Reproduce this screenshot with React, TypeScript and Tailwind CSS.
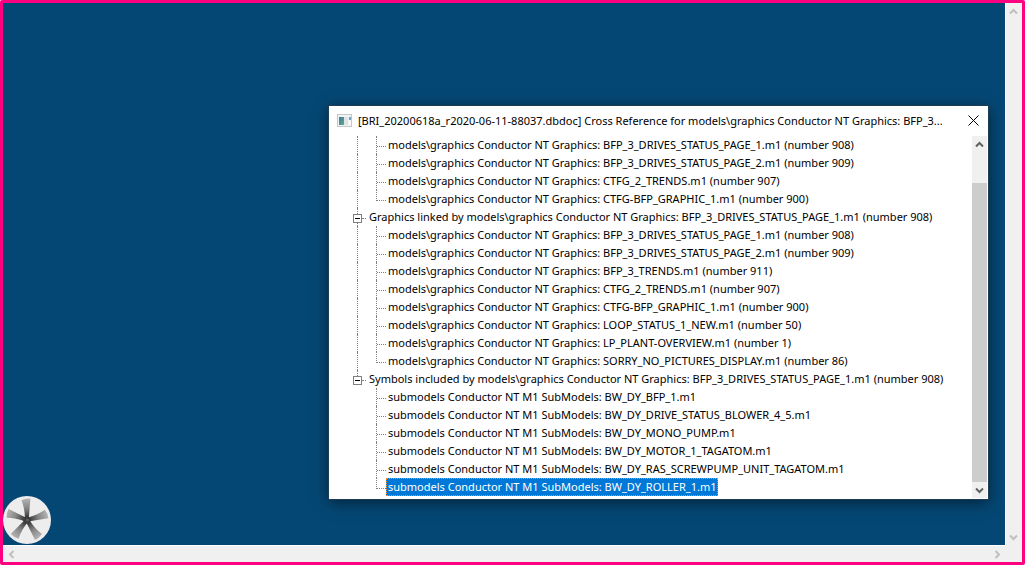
import { useState } from "react";
import clsx from "clsx";

type Direction = "up" | "down" | "left" | "right";

type TreeGroup = {
  id: string;
  // the header of the first group is scrolled out of view
  title?: string;
  items: string[];
};

const GRAPHICS = "models\\graphics Conductor NT Graphics: ";
const SUBMODELS = "submodels Conductor NT M1 SubModels: ";

const groups: TreeGroup[] = [
  {
    id: "linking",
    items: [
      GRAPHICS + "BFP_3_DRIVES_STATUS_PAGE_1.m1 (number 908)",
      GRAPHICS + "BFP_3_DRIVES_STATUS_PAGE_2.m1 (number 909)",
      GRAPHICS + "CTFG_2_TRENDS.m1 (number 907)",
      GRAPHICS + "CTFG-BFP_GRAPHIC_1.m1 (number 900)",
    ],
  },
  {
    id: "linked",
    title:
      "Graphics linked by " + GRAPHICS + "BFP_3_DRIVES_STATUS_PAGE_1.m1 (number 908)",
    items: [
      GRAPHICS + "BFP_3_DRIVES_STATUS_PAGE_1.m1 (number 908)",
      GRAPHICS + "BFP_3_DRIVES_STATUS_PAGE_2.m1 (number 909)",
      GRAPHICS + "BFP_3_TRENDS.m1 (number 911)",
      GRAPHICS + "CTFG_2_TRENDS.m1 (number 907)",
      GRAPHICS + "CTFG-BFP_GRAPHIC_1.m1 (number 900)",
      GRAPHICS + "LOOP_STATUS_1_NEW.m1 (number 50)",
      GRAPHICS + "LP_PLANT-OVERVIEW.m1 (number 1)",
      GRAPHICS + "SORRY_NO_PICTURES_DISPLAY.m1 (number 86)",
    ],
  },
  {
    id: "symbols",
    title:
      "Symbols included by " + GRAPHICS + "BFP_3_DRIVES_STATUS_PAGE_1.m1 (number 908)",
    items: [
      SUBMODELS + "BW_DY_BFP_1.m1",
      SUBMODELS + "BW_DY_DRIVE_STATUS_BLOWER_4_5.m1",
      SUBMODELS + "BW_DY_MONO_PUMP.m1",
      SUBMODELS + "BW_DY_MOTOR_1_TAGATOM.m1",
      SUBMODELS + "BW_DY_RAS_SCREWPUMP_UNIT_TAGATOM.m1",
      SUBMODELS + "BW_DY_ROLLER_1.m1",
    ],
  },
];

const chevrons: Record<Direction, string> = {
  up: "M1 6.5 4.5 3 8 6.5",
  down: "M1 2.5 4.5 6 8 2.5",
  left: "M6.5 1 3 4.5 6.5 8",
  right: "M2.5 1 6 4.5 2.5 8",
};

function ScrollButton({ direction, label }: { direction: Direction; label: string }) {
  return (
    <button
      aria-label={label}
      className="flex size-4 shrink-0 items-center justify-center"
    >
      <svg width="9" height="9" viewBox="0 0 9 9" fill="none">
        <path d={chevrons[direction]} stroke="currentColor" strokeWidth="2" />
      </svg>
    </button>
  );
}

function FanIcon() {
  return (
    <svg width="48" height="48" viewBox="0 0 48 48">
      <defs>
        <linearGradient id="blade" x1="0" y1="0" x2="0" y2="1">
          <stop offset="0" stopColor="#b4b4b4" />
          <stop offset="0.5" stopColor="#858585" />
          <stop offset="1" stopColor="#333333" />
        </linearGradient>
      </defs>
      <circle cx="24" cy="24" r="24" fill="#ededed" />
      {[-3, 73, 146, 217, 289].map((angle) => (
        <path
          key={angle}
          d="M19.5 4Q24 2 28.5 3L26 22H22Q22.500 13 19.500 4Z"
          fill="url(#blade)"
          transform={`rotate(${angle} 24 24)`}
        />
      ))}
      <circle cx="24" cy="24" r="3.5" fill="#3c3c3c" />
      <circle cx="24.5" cy="24" r="1.5" fill="#5a5a5a" />
    </svg>
  );
}

function DialogIcon() {
  return (
    <svg width="15" height="13" viewBox="0 0 15 13" className="shrink-0">
      <defs>
        <linearGradient id="pane" x1="0" y1="0" x2="1" y2="1">
          <stop offset="0" stopColor="#3f74a8" />
          <stop offset="1" stopColor="#5fae7c" />
        </linearGradient>
      </defs>
      <rect x="0.5" y="0.5" width="14" height="12" fill="#f1f2f3" stroke="#c4c8cc" />
      <rect x="2" y="3" width="5" height="8" fill="url(#pane)" />
      <rect x="7" y="3" width="4" height="8" fill="#dfe3e6" />
      <rect x="12" y="3" width="2" height="3" fill="#6da3c0" />
      <rect x="12" y="6" width="2" height="5" fill="#fafafa" />
    </svg>
  );
}

export default function App() {
  const [selected, setSelected] = useState("symbols-5");
  const [collapsed, setCollapsed] = useState<string[]>([]);

  const toggle = (id: string) =>
    setCollapsed((prev) =>
      prev.includes(id) ? prev.filter((x) => x !== id) : [...prev, id],
    );

  return (
    <div className="flex h-screen flex-col overflow-hidden rounded-xs border-3 border-[#ff0080] bg-[#f0f0f0] font-['Noto_Sans','Open_Sans',sans-serif] text-[11px] text-black">
      <div className="flex min-h-0 flex-1">
        <main className="relative min-w-0 flex-1 overflow-hidden bg-[#054774]">
          <div className="absolute bottom-px left-0">
            <FanIcon />
          </div>

          <section
            role="dialog"
            aria-labelledby="dialog-title"
            className="absolute top-[103px] right-[17px] w-[659px] bg-white shadow-[0_3px_14px_rgba(0,0,0,0.55)] outline outline-[#1d3d55]"
          >
            <header className="flex h-[30px] items-center pr-px pb-px pl-2">
              <DialogIcon />
              <h1
                id="dialog-title"
                className="ml-1.5 min-w-0 flex-1 leading-[18px] whitespace-nowrap"
              >
                [BRI_20200618a_r2020-06-11-88037.dbdoc] Cross Reference for
                models\graphics Conductor NT Graphics: BFP_3...
              </h1>
              <button
                aria-label="Close"
                className="flex size-7 shrink-0 items-center justify-center"
              >
                <svg width="11" height="11" viewBox="0 0 11 11">
                  <path d="M0.5 0.5 10.5 10.5M10.5 0.5 0.5 10.5" stroke="#000" />
                </svg>
              </button>
            </header>

            <div className="flex">
              <ul role="tree" className="min-w-0 flex-1 pb-[3px] pl-6">
                {groups.map((group, g) => {
                  const lastGroup = g === groups.length - 1;
                  const open = !collapsed.includes(group.id);
                  return (
                    <li key={group.id} role="treeitem" aria-expanded={open}>
                      {group.title && (
                        <div className="flex h-[18px]">
                          <div className="flex w-[9px] shrink-0 flex-col items-center">
                            <span className="h-1.5 w-px border-l border-dotted border-[#808080]" />
                            <button
                              aria-label={open ? "Collapse" : "Expand"}
                              onClick={() => toggle(group.id)}
                              className="flex size-[9px] items-center justify-center border border-[#808080] bg-white"
                            >
                              <span className="h-px w-[5px] bg-black" />
                            </button>
                            {!lastGroup && (
                              <span className="w-px flex-1 border-l border-dotted border-[#808080]" />
                            )}
                          </div>
                          <span className="mr-px h-[11px] w-1 shrink-0 border-b border-dotted border-[#808080]" />
                          <button
                            onClick={() => setSelected(group.id)}
                            className={clsx(
                              "px-0.5 leading-[18px] whitespace-nowrap",
                              selected === group.id && "bg-[#0078d7] text-white",
                            )}
                          >
                            {group.title}
                          </button>
                        </div>
                      )}
                      {open && (
                        <ul role="group" className="flex flex-col pl-1">
                          {group.items.map((item, i) => {
                            const id = `${group.id}-${i}`;
                            return (
                              <li key={id} role="treeitem" className="flex h-[18px]">
                                <span
                                  className={clsx(
                                    "w-[19px] shrink-0",
                                    !lastGroup && "border-l border-dotted border-[#808080]",
                                  )}
                                />
                                <span
                                  className={clsx(
                                    "w-2.5 shrink-0 border-l border-dotted border-[#808080]",
                                    i === group.items.length - 1 && "h-[11px]",
                                  )}
                                >
                                  <span className="block h-[11px] border-b border-dotted border-[#808080]" />
                                </span>
                                <button
                                  onClick={() => setSelected(id)}
                                  className={clsx(
                                    "border px-px leading-4 whitespace-nowrap",
                                    selected === id
                                      ? "border-dotted border-[#ff8728] bg-[#0078d7] bg-clip-border text-white"
                                      : "border-transparent",
                                  )}
                                >
                                  {item}
                                </button>
                              </li>
                            );
                          })}
                        </ul>
                      )}
                    </li>
                  );
                })}
              </ul>

              <div className="mr-px mb-px flex w-[15px] shrink-0 flex-col items-center bg-[#f0f0f0] text-[#606060]">
                <ScrollButton direction="up" label="Scroll list up" />
                <div className="mt-[31px] w-full flex-1 bg-[#cdcdcd]" />
                <ScrollButton direction="down" label="Scroll list down" />
              </div>
            </div>
          </section>
        </main>

        <div className="flex w-[17px] shrink-0 flex-col items-center justify-between border-l border-white pr-0.5 text-[#bfbfbf]">
          <ScrollButton direction="up" label="Scroll up" />
          <ScrollButton direction="down" label="Scroll down" />
        </div>
      </div>

      <div className="mr-[17px] flex h-[17px] shrink-0 justify-between border-t border-white text-[#bfbfbf]">
        <ScrollButton direction="left" label="Scroll left" />
        <ScrollButton direction="right" label="Scroll right" />
      </div>
    </div>
  );
}
